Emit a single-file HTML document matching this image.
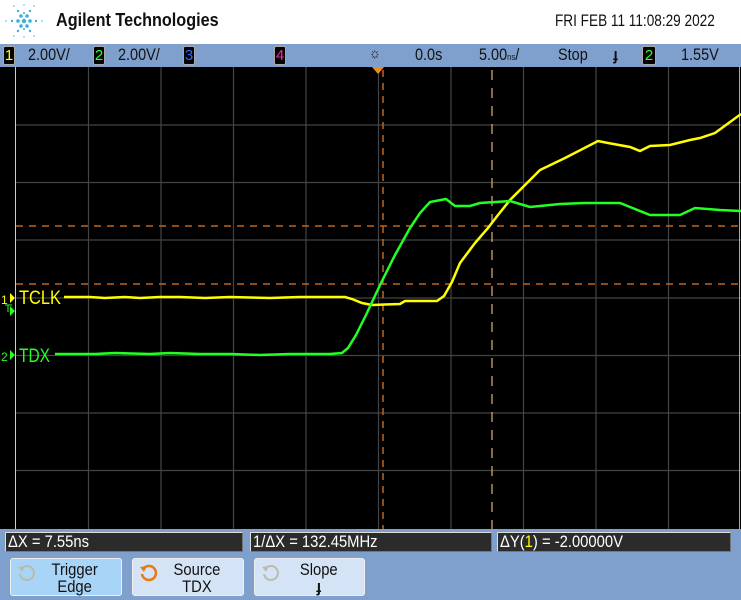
<!DOCTYPE html>
<html><head><meta charset="utf-8"><style>
*{margin:0;padding:0;box-sizing:border-box}
body{width:741px;height:600px;overflow:hidden;background:#fff;font-family:"Liberation Sans",sans-serif;position:relative}
.hdr{position:absolute;top:0;left:0;width:741px;height:44px;background:#fff}
.logo{position:absolute;left:56px;top:10px;font-weight:bold;font-size:18px;color:#111;transform:scaleX(0.9);transform-origin:left}
.date{position:absolute;left:555px;top:11px;font-size:17px;color:#111;transform:scaleX(0.8);transform-origin:left;white-space:nowrap}
.bar{position:absolute;top:44px;left:0;width:741px;height:23px;background:#7fa0cd;font-size:17px;color:#111}
.bar span{position:absolute;top:1px;transform:scaleX(0.85);transform-origin:left;white-space:nowrap}
.ch{position:absolute;top:2px;width:12px;height:19px;background:#000;border:1px solid #aaa;border-radius:2px;font-size:15px;text-align:center;line-height:17px}
.bot{position:absolute;top:529px;left:0;width:741px;height:71px;background:#7fa0cd}
.m{position:absolute;top:3px;height:20px;background:#2b2b2b;border:1px solid #ddd;border-right-color:#777;border-bottom-color:#777;color:#fff;font-size:17px;line-height:18px;padding-left:2px;white-space:nowrap;overflow:hidden}
.m i{font-style:normal;display:inline-block;transform:scaleX(0.87);transform-origin:left}
.btn{position:absolute;top:29px;height:38px;background:#d4e4f6;border:1px solid #eee;border-radius:3px;font-size:17px;color:#111;text-align:center;line-height:17px;padding-top:2px;padding-left:18px}
.btn i{font-style:normal;display:inline-block;transform:scaleX(0.87)}
.ic{position:absolute;left:5px;top:4px}
</style></head><body>
<div class="hdr">
<svg style="position:absolute;left:4px;top:3px" width="40" height="36" viewBox="0 0 40 36">
<g fill="#3ab0d8">
<circle cx="20" cy="18" r="2.2"/><circle cx="14" cy="18" r="1.8"/><circle cx="26" cy="18" r="1.8"/><circle cx="17" cy="13" r="1.8"/><circle cx="23" cy="13" r="1.8"/><circle cx="17" cy="23" r="1.8"/><circle cx="23" cy="23" r="1.8"/>
<circle cx="8" cy="18" r="1.2"/><circle cx="32" cy="18" r="1.2"/><circle cx="14" cy="8" r="1.2"/><circle cx="26" cy="8" r="1.2"/><circle cx="14" cy="28" r="1.2"/><circle cx="26" cy="28" r="1.2"/><circle cx="20" cy="10" r="1"/><circle cx="20" cy="26" r="1"/>
<circle cx="2" cy="18" r=".7"/><circle cx="38" cy="18" r=".7"/><circle cx="20" cy="2" r=".7"/><circle cx="20" cy="34" r=".7"/><circle cx="10" cy="3" r=".7"/><circle cx="30" cy="3" r=".7"/><circle cx="10" cy="33" r=".7"/><circle cx="30" cy="33" r=".7"/>
</g></svg>
<div class="logo">Agilent Technologies</div>
<div class="date">FRI FEB 11 11:08:29 2022</div>
</div>
<div class="bar">
<div class="ch" style="left:3px;color:#ff0">1</div><span style="left:28px">2.00V/</span>
<div class="ch" style="left:93px;color:#3f3">2</div><span style="left:118px">2.00V/</span>
<div class="ch" style="left:183px;color:#36f">3</div>
<div class="ch" style="left:274px;color:#f2a">4</div>
<span style="left:369px;font-size:15px">☼</span>
<span style="left:415px">0.0s</span>
<span style="left:479px">5.00<small style="font-size:9px">ns</small>/</span>
<span style="left:558px">Stop</span>
<span style="left:613px;font-weight:bold">ɟ</span>
<div class="ch" style="left:642px;width:14px;color:#3f3">2</div>
<span style="left:681px">1.55V</span>
</div>
<svg style="position:absolute;left:0;top:67px" width="741" height="462" viewBox="0 67 741 462">
<rect x="0" y="67" width="741" height="462" fill="#000"/>
<g stroke="#444" stroke-width="1.2">
<line x1="88.5" y1="67" x2="88.5" y2="529"/><line x1="161" y1="67" x2="161" y2="529"/><line x1="233.5" y1="67" x2="233.5" y2="529"/><line x1="306" y1="67" x2="306" y2="529"/><line x1="378.5" y1="67" x2="378.5" y2="529"/><line x1="451" y1="67" x2="451" y2="529"/><line x1="523.5" y1="67" x2="523.5" y2="529"/><line x1="596" y1="67" x2="596" y2="529"/><line x1="668.5" y1="67" x2="668.5" y2="529"/>
<line x1="16" y1="125" x2="741" y2="125"/><line x1="16" y1="182.5" x2="741" y2="182.5"/><line x1="16" y1="240" x2="741" y2="240"/><line x1="16" y1="298" x2="741" y2="298"/><line x1="16" y1="355.5" x2="741" y2="355.5"/><line x1="16" y1="413" x2="741" y2="413"/><line x1="16" y1="470.5" x2="741" y2="470.5"/>
</g>
<line x1="15.5" y1="67" x2="15.5" y2="529" stroke="#ccc" stroke-width="1"/>
<line x1="739.5" y1="67" x2="739.5" y2="529" stroke="#aaa" stroke-width="1"/>
<g stroke="#c0651a" stroke-width="1.5" stroke-dasharray="7,6">
<line x1="16" y1="226" x2="741" y2="226"/><line x1="16" y1="284" x2="741" y2="284"/>
<line x1="383" y1="70" x2="383" y2="529"/></g>
<line x1="492" y1="70" x2="492" y2="529" stroke="#e0b070" stroke-width="1.2" stroke-dasharray="10,8"/>
<polygon points="372,67 384,67 378,74" fill="#f08a20"/>
<polyline fill="none" stroke="#ff0" stroke-width="2.5" points="64,297 90,297 105,298 125,297 140,298 160,297 180,297 205,298 230,297 270,298 300,297 345,297 352,299 362,303 372,305 400,304 405,301 437,301 444,296 452,282 460,263 475,243 488,228 498,215 510,200 525,185 540,170 565,158 598,141 608,143 630,147 640,151 650,146 670,145 690,140 700,138 715,133 741,114"/>
<polyline fill="none" stroke="#2f2" stroke-width="2.5" points="55,354 95,354 115,353 150,354 170,353 200,354 230,354 260,355 290,354 330,354 342,353 348,348 356,335 366,315 380,285 395,255 410,228 420,213 430,202 446,199 455,206 470,206 480,203 510,201 530,207 560,204 585,203 620,203 630,207 650,215 680,215 695,208 720,210 741,211"/>
<text x="19" y="304" fill="#ff0" font-size="19" textLength="42" lengthAdjust="spacingAndGlyphs">TCLK</text>
<text x="19" y="362" fill="#2f2" font-size="19" textLength="31" lengthAdjust="spacingAndGlyphs">TDX</text>
<text x="1" y="304" fill="#ff0" font-size="12">1</text><polygon points="10,293 15,298 10,303" fill="#ff0"/>
<polygon points="10,306 15,311 10,316" fill="#2f2"/><line x1="5" y1="305" x2="12" y2="305" stroke="#2f2"/><line x1="8" y1="305" x2="8" y2="312" stroke="#2f2"/>
<text x="1" y="361" fill="#2f2" font-size="12">2</text><polygon points="10,350 15,355 10,360" fill="#2f2"/>
</svg>
<div class="bot">
<div class="m" style="left:5px;width:238px"><i>ΔX = 7.55ns</i></div>
<div class="m" style="left:250px;width:242px"><i>1/ΔX = 132.45MHz</i></div>
<div class="m" style="left:497px;width:234px"><i>ΔY(<span style="color:#ff0">1</span>) = -2.00000V</i></div>
<div class="btn" style="left:10px;width:112px;background:#a8d4f8"><svg class="ic" width="22" height="20"><path d="M6 5 A7 7 0 1 1 4 11" fill="none" stroke="#bba" stroke-width="2"/><polygon points="2,4 9,3 6,9" fill="#bba"/></svg><i>Trigger<br>Edge</i></div>
<div class="btn" style="left:132px;width:112px"><svg class="ic" width="22" height="20"><path d="M6 5 A7 7 0 1 1 4 11" fill="none" stroke="#e87a10" stroke-width="2.5"/><polygon points="2,4 9,3 6,9" fill="#e87a10"/></svg><i>Source<br>TDX</i></div>
<div class="btn" style="left:254px;width:111px"><svg class="ic" width="22" height="20"><path d="M6 5 A7 7 0 1 1 4 11" fill="none" stroke="#bba" stroke-width="2"/><polygon points="2,4 9,3 6,9" fill="#bba"/></svg><i>Slope<br><b>ɟ</b></i></div>
</div>
</body></html>
